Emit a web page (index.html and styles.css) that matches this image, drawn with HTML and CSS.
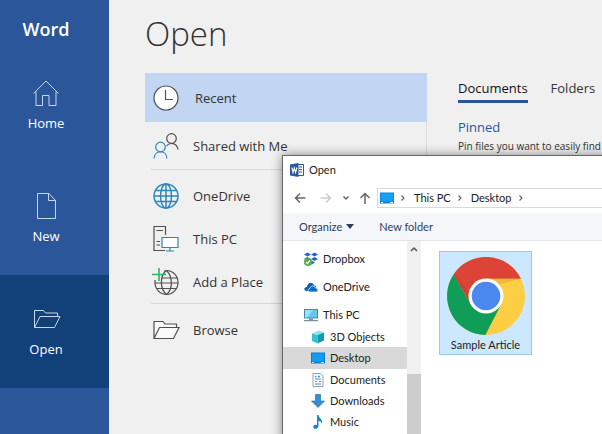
FILE: index.html
```html
<!DOCTYPE html>
<html lang="en">
<head>
<meta charset="utf-8">
<title>Word - Open</title>
<link rel="stylesheet" href="styles.css">
</head>
<body>
<div class="app">
  <nav class="sidebar" aria-label="File">
    <div class="brand">Word</div>
    <a class="nav-item" href="#home">
      <svg class="nav-icon" viewBox="0 0 28 28"><path d="M1.500 14.500 14 2 26.500 14.500M4 12.500V26.500H10.500V16.500H17V26.500H24V12.500"/></svg>
      <span>Home</span>
    </a>
    <a class="nav-item" href="#new">
      <svg class="nav-icon" viewBox="0 0 28 28"><path d="M5.500 1.500H17L23.500 8.500V26.500H5.500ZM16.500 1.500V8.500H23.500"/></svg>
      <span>New</span>
    </a>
    <a class="nav-item active" href="#open">
      <svg class="nav-icon" viewBox="0 0 28 28"><path d="M2.500 22.500V5.500H11.500L13.500 8H25.500V11.500M2.500 22.500 8 11.500H28L22.500 22.500Z"/></svg>
      <span>Open</span>
    </a>
  </nav>

  <main class="main">
    <h1>Open</h1>
    <div class="columns">
      <div class="places">
        <a class="place selected" href="#recent">
          <svg class="place-icon" viewBox="0 0 26 26"><circle cx="13" cy="13" r="12" fill="#fff"/><path d="M12.500 5V14.500H20"/></svg>
          <span>Recent</span>
        </a>
        <a class="place shared" href="#shared">
          <svg class="place-icon" viewBox="0 0 26 26"><circle cx="18.500" cy="5.500" r="4.800"/><path d="M13.500 13C16 9.500 24 9 25 16.500"/><g class="blue"><circle cx="7.500" cy="14" r="4.800"/><path d="M1 25.500C1.500 16.500 13.500 16.500 14 25.500"/></g></svg>
          <span>Shared with Me</span>
        </a>
        <hr>
        <a class="place" href="#onedrive">
          <svg class="place-icon globe" viewBox="0 0 26 26"><circle cx="13" cy="13" r="12"/><ellipse cx="13" cy="13" rx="5.500" ry="12"/><path d="M1 13H25M3 7.500H23M3 18.500H23M13 1V25"/></svg>
          <span>OneDrive</span>
        </a>
        <a class="place" href="#this-pc">
          <svg class="place-icon" viewBox="0 0 26 26"><path d="M12 24.500H1V.500H12.500V9M3.500 4.500H10M3.500 15.500H7M3.500 19H7"/><g class="blue"><path fill="#fff" d="M9 11.500H25V21.500H9Z"/><path d="M17 21.500V25M13 25H21"/></g></svg>
          <span>This PC</span>
        </a>
        <a class="place" href="#add-place">
          <svg class="place-icon" viewBox="0 0 26 26"><path d="M11 2C17 0 25 5 25 13.500 25 20 20 25.500 13.500 25.500 7 25.500 2 20 2 13.500V11M13 1.500C6.500 8 7 20 13.500 25.500 20 20 20 8 13.500 1.500M9 9H24M2 14H25M4 19.500H23"/><path class="green" d="M6 -1V12M-1 5.500H13"/></svg>
          <span>Add a Place</span>
        </a>
        <hr>
        <a class="place" href="#browse">
          <svg class="place-icon" viewBox="0 0 26 26"><path d="M1 21.500V4.500H10L12 7H23.500V10.500M1 21.500 6.500 10.500H26L20.500 21.500Z" fill="#fafafa"/></svg>
          <span>Browse</span>
        </a>
      </div>
      <section class="files">
        <div class="tabs">
          <a class="tab current" href="#documents">Documents</a>
          <a class="tab" href="#folders">Folders</a>
        </div>
        <h2>Pinned</h2>
        <p>Pin files you want to easily find</p>
      </section>
    </div>
  </main>

  <section class="dialog" role="dialog" aria-labelledby="dialog-title">
    <header class="titlebar">
      <svg class="word-icon" viewBox="0 0 14 14"><path fill="#fff" stroke="#2b579a" d="M7 1.500H13.500V12.500H7Z"/><path stroke="#2b579a" d="M9 4H12M9 6.500H12M9 9H12"/><path fill="#2b579a" d="M0 1.500 8.500 0V14L0 12.500Z"/><path fill="none" stroke="#fff" stroke-width="1.100" d="M1.800 4.500 3 9.500 4.300 5 5.600 9.500 6.900 4.500"/></svg>
      <span id="dialog-title">Open</span>
    </header>
    <div class="navbar">
      <button class="arrow" aria-label="Back"><svg viewBox="0 0 12 12"><path d="M11.500 6H1.500M6 1.500 1.500 6 6 10.500"/></svg></button>
      <button class="arrow faded" aria-label="Forward"><svg viewBox="0 0 12 12"><path d="M.500 6H10.500M6 1.500 10.500 6 6 10.500"/></svg></button>
      <button class="arrow small" aria-label="Recent locations"><svg viewBox="0 0 12 12"><path d="M3.500 4.500 6 7 8.500 4.500"/></svg></button>
      <button class="arrow" aria-label="Up"><svg viewBox="0 0 12 12"><path d="M6 12V1.500M1.500 6 6 1.500 10.500 6"/></svg></button>
      <div class="address">
        <svg class="screen" viewBox="0 0 14 12"><path fill="#0a84d8" d="M0 .500H14V11.500H0Z"/><path fill="#16a0f5" d="M1 1.500H13V9.500H1Z"/><path fill="#fff" d="M1 10H3V11H1ZM10 10H13V11H10Z"/></svg>
        <svg class="crumb" viewBox="0 0 6 8"><path d="M1.500 1.500 4 4 1.500 6.500"/></svg>
        <a href="#pc">This PC</a>
        <svg class="crumb" viewBox="0 0 6 8"><path d="M1.500 1.500 4 4 1.500 6.500"/></svg>
        <a href="#desktop">Desktop</a>
        <svg class="crumb" viewBox="0 0 6 8"><path d="M1.500 1.500 4 4 1.500 6.500"/></svg>
      </div>
    </div>
    <div class="toolbar">
      <button>Organize <svg class="caret" viewBox="0 0 8 5"><path d="M0 0H8L4 5Z"/></svg></button>
      <button>New folder</button>
    </div>
    <div class="browser">
      <div class="tree">
        <a class="node top" href="#t1"><svg viewBox="0 0 14 14"><path fill="#2366d1" d="M0 2.500 3.500.500 7 2.500 3.500 4.500ZM7 2.500 10.500.500 14 2.500 10.500 4.500ZM0 7 3.500 5 7 7 3.500 9ZM7 7 10.500 5 14 7 10.500 9ZM4 10.500 7.500 8.500 11 10.500 7.500 12.500Z"/><circle cx="4" cy="10" r="4" fill="#4fae46"/><path d="M2 10 3.500 11.500 6 8.500" fill="none" stroke="#fff" stroke-width="1.200"/></svg>Dropbox</a>
        <a class="node top" href="#t2"><svg viewBox="0 0 14 14"><path fill="#0a5fb4" d="M3 11C-1 11 0 6.500 3 7 3 2.500 9 1 10 5.500 12 5 12.500 7 12 8L6 11Z"/><path fill="#0a6cc8" stroke="#fff" stroke-width=".7" d="M6 12C3.500 12 3.500 8.500 6 8.500 6.500 5.500 10.500 5 11.500 8 14.500 8 14.500 12 12 12Z"/></svg>OneDrive</a>
        <a class="node top" href="#t3"><svg viewBox="0 0 14 14"><path fill="#4b86a8" d="M0 1H14V10.500H0Z"/><path fill="#63c7f4" d="M1 2H13V9.500H1Z"/><path fill="#9ae0fb" d="M1 2H9L3 9.500H1Z"/><path fill="#78909c" d="M5 10.500H9V12H5ZM0 12H14V13.200H0Z"/></svg>This PC</a>
        <a class="node" href="#t4"><svg viewBox="0 0 14 14"><path fill="#8be3ee" d="M1 3.500 8 .500 13 2.500 6.500 5Z"/><path fill="#35bfd3" d="M1 3.500 6.500 5V13.500L1 11Z"/><path fill="#119bb3" d="M6.500 5 13 2.500V10.500L6.500 13.500Z"/></svg>3D Objects</a>
        <a class="node chosen" href="#t5"><svg viewBox="0 0 14 14"><path fill="#087ad0" d="M0 1.500H14V12.500H0Z"/><path fill="#149cf5" d="M1 2.500H13V10.500H1Z"/><path fill="#bfe5ff" d="M1 11H3V12H1ZM10 11H13V12H10Z"/></svg>Desktop</a>
        <a class="node" href="#t6"><svg viewBox="0 0 14 14"><path fill="#fff" stroke="#8fa3ad" d="M2 .500H9.500L12 3V13.500H2Z"/><path stroke="#3d91bd" d="M4 6H10M4 8.500H6M8 8.500H10M4 11H10"/><path stroke="#3d91bd" stroke-width="1.500" d="M4 3.500H5.500M7 3.500H9"/></svg>Documents</a>
        <a class="node" href="#t7"><svg viewBox="0 0 14 14"><path fill="#368fd2" stroke="#2476b5" stroke-width=".7" d="M4.500.500H9.500V7H13.500L7 13.500.500 7H4.500Z"/></svg>Downloads</a>
        <a class="node" href="#t8"><svg viewBox="0 0 14 14"><path fill="#1688c9" d="M6 0H7.500C8 3.500 12 4 11 9 10.500 7 9 6 7.500 6V11C7 15 1 14.500 2.500 11 3.300 9.500 5 9.500 6 10Z"/></svg>Music</a>
      </div>
      <div class="scrollbar">
        <svg viewBox="0 0 8 6"><path d="M1 5 4 2 7 5"/></svg>
        <div class="thumb"></div>
      </div>
      <div class="content">
        <a class="file" href="#sample">
          <svg class="chrome" viewBox="-39 -39 78 78">
            <circle r="39" fill="#fcce43"/>
            <path fill="#db4437" d="M-32.500 -21.500A39 39 0 0 1 35 -17.300H0L-15 8.700Z"/>
            <path fill="#0f9d58" d="M-32.500 -21.500A39 39 0 0 0 -.700 39L15 8.700-15 8.700Z"/>
            <path fill="#b93327" opacity=".35" d="M-32.500 -21.500-28 -19-13 4-15 8.700Z"/>
            <path fill="#dda52e" opacity=".5" d="M0 -17.300H34.600L14-12Z"/>
            <circle r="17.500" fill="#fff"/><circle r="14.300" fill="#4a87ee"/>
          </svg>
          <span>Sample Article</span>
        </a>
      </div>
    </div>
  </section>
</div>
</body>
</html>
```
FILE: styles.css
```css
* { box-sizing: border-box; }

body {
  margin: 0;
  background: #f0f0f0;
  color: #333;
  font: 13px/20px "Open Sans", "Noto Sans", sans-serif;
}

a { color: inherit; text-decoration: none; }
svg { display: block; flex: none; overflow: visible; }
button { padding: 0; border: 0; background: none; font: inherit; color: inherit; }

.app {
  position: relative;
  display: grid;
  grid-template-columns: 109px 1fr;
  height: 100vh;
  min-height: 400px;
  overflow: hidden;
}

/* Sidebar */
.sidebar { background: #2b579a; color: #fff; }

.brand {
  height: 49px;
  padding: 18px 17px 0 0;
  font-size: 18px;
  line-height: 22px;
  font-weight: 600;
  text-align: center;
}

.nav-item {
  display: flex;
  flex-direction: column;
  align-items: center;
  gap: 6px;
  height: 113px;
  padding: 30px 17px 0 0;
}
.nav-item.active { background: #124078; }
.nav-icon { width: 28px; height: 28px; fill: none; stroke: #c5d8f2; stroke-width: 1; }

/* Open page */
.main { min-width: 0; padding: 10px 0 0 36px; }

h1 {
  height: 63px;
  margin: 0;
  font-size: 33px;
  line-height: 48px;
  font-weight: 300;
}

.columns { display: grid; grid-template-columns: 282px 1fr; height: 100%; }
.places { border-right: 1px solid #dcdcdc; }

.place {
  display: flex;
  align-items: center;
  gap: 14px;
  height: 43px;
  padding-left: 8px;
}
.place.selected { height: 49px; gap: 16px; margin-right: -1px; background: #c2d5f2; }
.place.shared { height: 47px; }
.place-icon { width: 26px; height: 26px; fill: none; stroke: #505050; stroke-width: 1.2; }
.blue { stroke: #2b88b8; }
.globe { stroke: #2b88b8; stroke-width: 1.5; fill: none; }
.green { stroke: #35b25e; stroke-width: 1.6; }
hr { margin: 0 0 4px 6px; border: 0; border-top: 1px solid #d6d6d6; }

.files { min-width: 0; padding: 5px 0 0 31px; white-space: nowrap; }
.tabs { display: flex; gap: 23px; }
.tab { padding-bottom: 2px; border-bottom: 3px solid transparent; }
.tab.current { border-color: #2b579a; color: #111; }
h2 { margin: 14px 0 0; color: #2b579a; font-size: 13px; line-height: 20px; font-weight: 400; }
p { margin: 0; font-size: 10px; line-height: 18px; }

/* File dialog */
.dialog {
  position: absolute;
  top: 155px;
  left: 282px;
  right: -8px;
  bottom: -8px;
  display: flex;
  flex-direction: column;
  border: 1px solid #666;
  background: #fff;
  box-shadow: 0 0 10px rgba(0, 0, 0, .45);
  color: #222;
  font: 11px/16px Lato, "Open Sans", sans-serif;
}

.titlebar { display: flex; align-items: center; gap: 5px; height: 27px; padding-left: 7px; }
.word-icon { width: 14px; height: 14px; fill: none; }

.navbar { display: flex; align-items: center; height: 30px; padding-left: 11px; }
.arrow { margin-right: 14px; }
.arrow svg { width: 12px; height: 12px; fill: none; stroke: #666; stroke-width: 1.5; }
.arrow.faded { margin-right: 8px; }
.arrow.faded svg { stroke: #ccc; }
.arrow.small { margin-right: 7px; }
.arrow:nth-of-type(4) { margin-right: 6px; }

.address {
  display: flex;
  flex: 1;
  align-items: center;
  height: 20px;
  padding-left: 2px;
  border: 1px solid #d9d9d9;
}
.screen { width: 14px; height: 12px; }
.crumb { width: 6px; height: 8px; margin: 0 8px 0 6px; fill: none; stroke: #666; stroke-width: 1.2; }

.toolbar {
  display: flex;
  gap: 25px;
  height: 28px;
  padding-left: 16px;
  border-bottom: 1px solid #e2e5e9;
  background: #f4f6f9;
  color: #2e415e;
}
.toolbar button { display: flex; align-items: center; gap: 4px; }
.caret { width: 8px; height: 5px; fill: #2e415e; }

.browser { display: flex; flex: 1; min-height: 0; }
.tree { flex: none; width: 124px; padding-top: 4px; overflow: hidden; }
.node { display: flex; align-items: center; gap: 5px; height: 21px; padding-left: 28px; white-space: nowrap; }
.node.top { height: 28px; padding-left: 21px; }
.node.top + .node:not(.top) { margin-top: -3px; }
.node.chosen { height: 22px; background: #d9d9d9; }
.node svg { width: 14px; height: 14px; }

.scrollbar {
  display: flex;
  flex-direction: column;
  align-items: center;
  width: 14px;
  padding-top: 5px;
  background: #f0f0f0;
}
.scrollbar > svg { width: 8px; height: 6px; fill: none; stroke: #555; stroke-width: 1.5; }
.thumb { flex: 1; width: 100%; margin-top: 122px; background: #cdcdcd; }

.content { flex: 1; padding: 10px 18px; }
.file {
  display: flex;
  flex-direction: column;
  align-items: center;
  width: 93px;
  padding: 5px 0 1px;
  border: 1px solid #99c9e8;
  background: #cce8ff;
  white-space: nowrap;
}
.file span { margin-top: 2px; }
.chrome { width: 78px; height: 78px; }
```
